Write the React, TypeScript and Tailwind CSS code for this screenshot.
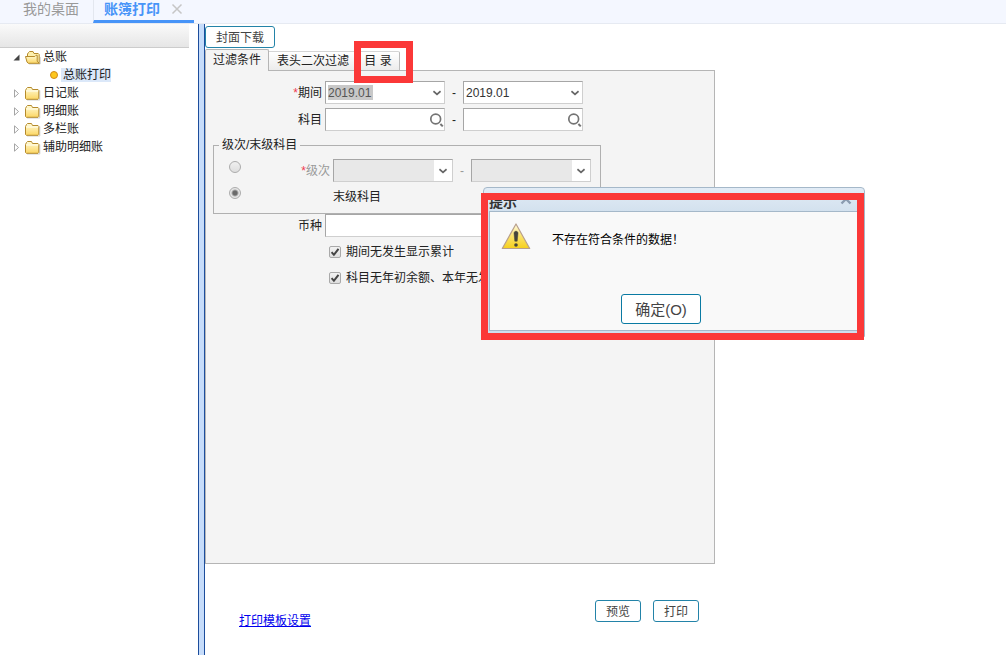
import { useState } from "react";
import type { ReactNode } from "react";

const livros = ["日记账", "明细账", "多栏账", "辅助明细账"];

const FolderClosed = () => (
  <svg className="h-4 w-4 shrink-0" viewBox="0 0 16 16">
    <defs>
      <linearGradient id="folderFill" x1="0" y1="0" x2="0" y2="1">
        <stop offset="0" stopColor="#fffbd8" />
        <stop offset="1" stopColor="#fcd663" />
      </linearGradient>
    </defs>
    <path d="M2 15h12.8V5.5" fill="none" stroke="#cfcfcf" />
    <path
      d="M.5 5.5 1.5 3.5 2.5 2.5h4l1 2h5.5l.8.8V13.5l-.8.8H1.3l-.8-.8z"
      fill="url(#folderFill)"
      stroke="#b58a2c"
    />
    <path d="M1.2 6h12" stroke="#fffef0" />
  </svg>
);

const FolderOpen = () => (
  <svg className="h-4 w-4 shrink-0" viewBox="0 0 16 16">
    <path d="M4 15h11.2V8" fill="none" stroke="#cfcfcf" />
    <path
      d="M2.5 12V5l1-1.5 1-1h3.5l1 2h4.2l1 1v8h-11z"
      fill="#fdf0ae"
      stroke="#b58a2c"
    />
    <path
      d="M.5 7.5h9.3l1.2-1.2h1.2v6l2.3 2H3.2L2 13z"
      fill="url(#folderFill)"
      stroke="#b58a2c"
    />
  </svg>
);

const Chevron = () => (
  <svg className="h-2 w-2" viewBox="0 0 8 8">
    <path d="M.4 2.2 4 5.4l3.6-3.2" fill="none" stroke="#666" strokeWidth="1.8" />
  </svg>
);

const SearchIcon = () => (
  <svg className="h-4 w-4" viewBox="0 0 16 16">
    <circle cx="6.7" cy="7" r="4.9" fill="none" stroke="#747474" strokeWidth="1.7" />
    <path d="m11.4 12 2.4 2.4" stroke="#747474" strokeWidth="2" />
  </svg>
);

const WarningIcon = () => (
  <svg className="h-8 w-8 shrink-0" viewBox="0 0 32 32">
    <defs>
      <linearGradient id="warnFill" x1="0" y1="0" x2="0" y2="1">
        <stop offset="0" stopColor="#fffbe6" />
        <stop offset="0.5" stopColor="#fbe36a" />
        <stop offset="1" stopColor="#f6cf1c" />
      </linearGradient>
    </defs>
    <path
      d="M16 4 29.7 28.5H2.3z"
      fill="url(#warnFill)"
      stroke="#b89f8c"
      strokeWidth="1.2"
      strokeLinejoin="round"
    />
    <path
      d="M14 13.2c0-2.6 4-2.6 4 0l-.8 8h-2.4z"
      fill="#45443c"
      stroke="#45443c"
      strokeWidth=".5"
    />
    <circle cx="16" cy="25" r="1.8" fill="#45443c" />
  </svg>
);

interface PeriodoProps {
  label: string;
  selected?: boolean;
}

const PeriodoSelect = ({ label, selected }: PeriodoProps) => (
  <div className="relative h-[23px] w-[120px]">
    <select
      aria-label={label}
      className={
        "h-full w-full appearance-none border border-t-[#a6a6a6] border-r-[#cfcfcf] border-b-[#cfcfcf] border-l-[#a6a6a6] bg-white pl-0.5 outline-none " +
        (selected
          ? "bg-[linear-gradient(#c8c8c8,#c8c8c8)] bg-[length:45px_15px] bg-[position:2px_center] bg-no-repeat text-[#555]"
          : "text-[#333]")
      }
    >
      <option>2019.01</option>
    </select>
    <span className="pointer-events-none absolute inset-y-0 right-1 flex items-center">
      <Chevron />
    </span>
  </div>
);

const NivelSelect = ({ label }: { label: string }) => (
  <div className="relative h-[23px] w-[120px]">
    <select
      aria-label={label}
      disabled
      className="h-full w-full appearance-none border border-t-[#a6a6a6] border-r-[#cfcfcf] border-b-[#cfcfcf] border-l-[#a6a6a6] bg-[#e8e8e8] opacity-100"
    />
    <span className="pointer-events-none absolute inset-y-px right-px flex w-[18px] items-center justify-center bg-white">
      <Chevron />
    </span>
  </div>
);

const ContaInput = ({ label }: { label: string }) => (
  <div className="relative h-[23px] w-[120px]">
    <input
      type="text"
      aria-label={label}
      className="h-full w-full border border-t-[#a6a6a6] border-r-[#cfcfcf] border-b-[#cfcfcf] border-l-[#a6a6a6] bg-white pr-5 pl-0.5 outline-none"
    />
    <button
      type="button"
      aria-label="查询"
      className="absolute inset-y-0 right-0 flex items-center"
    >
      <SearchIcon />
    </button>
  </div>
);

const Traco = () => <span className="w-[18px] text-center">-</span>;

const Opcao = ({ children }: { children: ReactNode }) => (
  <label className="flex h-[26px] items-center gap-[5px] pl-[123px] whitespace-nowrap">
    <span className="relative flex h-3 w-3 shrink-0">
      <input
        type="checkbox"
        defaultChecked
        className="peer h-3 w-3 appearance-none rounded-xs border border-[#a9a9a9] bg-linear-to-b from-[#f2f2f2] to-[#dedede]"
      />
      <svg
        className="pointer-events-none absolute inset-0 hidden h-3 w-3 peer-checked:block"
        viewBox="0 0 12 12"
      >
        <path d="m2.6 6.2 2.3 2.6 4.6-6" fill="none" stroke="#444" strokeWidth="2" />
      </svg>
    </span>
    {children}
  </label>
);

const BotaoRodape = ({ children }: { children: ReactNode }) => (
  <button
    type="button"
    className="h-[22px] w-[46px] rounded-[3px] border border-[#2383a8] bg-white pt-px text-[#444]"
  >
    {children}
  </button>
);

const App = () => {
  const [modo, setModo] = useState("final");

  const radio =
    "mt-0.5 h-3 w-3 shrink-0 appearance-none self-start rounded-full border border-[#acacac] bg-linear-to-b from-[#f0f0f0] to-[#dedede] checked:bg-[radial-gradient(circle,#6a6a6a_2px,#e6e6e6_4px)]";

  return (
    <div className="relative flex min-h-screen flex-col bg-white font-['Liberation_Sans','Noto_Sans_CJK_SC',sans-serif] text-[12px] leading-[18px] text-[#222]">
      <nav className="flex h-6 border-b border-[#e6eaf2] bg-[#f4f7ff] text-[14px]">
        <a href="#desktop" className="w-[93px] pl-[23px] text-[#999]">
          我的桌面
        </a>
        <div className="flex w-[101px] items-start border-b-3 border-l border-b-[#4794f8] border-l-[#e3e7ef] pl-2.5 font-bold text-[#4794f8]">
          <a href="#print">账簿打印</a>
          <button type="button" aria-label="关闭" className="ml-[11px] flex h-[18px] items-center">
            <svg className="h-3 w-3" viewBox="0 0 12 12">
              <path d="m1.5 1.5 9 9m0-9-9 9" stroke="#c6c6c6" strokeWidth="1.5" />
            </svg>
          </button>
        </div>
      </nav>

      <div className="flex flex-1">
        <aside className="w-[198px] shrink-0">
          <div className="mr-[9px] h-6 border-b border-[#ccc] bg-linear-to-b from-[#fafafa] to-[#e6e6e6]" />
          <ul>
            <li>
              <div className="flex h-[18px] items-center pl-[13px]">
                <svg className="mr-[5px] h-[7px] w-[7px]" viewBox="0 0 7 7">
                  <path d="M6.5.5v6h-6z" fill="#444" />
                </svg>
                <FolderOpen />
                <span className="ml-0.5">总账</span>
              </div>
              <div className="flex h-[18px] items-center pl-[50px]">
                <span className="mr-[3px] h-2 w-2 rounded-full border border-[#d08a1a] bg-[#fdc71e]" />
                <a href="#general" className="bg-[#dbe8f9] pl-0.5 leading-[14px]">
                  总账打印
                </a>
              </div>
            </li>
            {livros.map((livro) => (
              <li key={livro} className="flex h-[18px] items-center pl-[13px]">
                <svg className="mr-[5px] h-[9px] w-[7px]" viewBox="0 0 7 9">
                  <path d="M1.5.8v7.4l4-3.7z" fill="#fff" stroke="#a5a5a5" />
                </svg>
                <FolderClosed />
                <span className="ml-0.5">{livro}</span>
              </li>
            ))}
          </ul>
        </aside>

        <div className="w-[7px] shrink-0 border-x border-[#1c4d9c] bg-[#c6dcfa]" />

        <main className="flex w-[510px] flex-col">
          <button
            type="button"
            className="mt-0.5 h-[22px] w-[70px] rounded-[3px] border border-[#2383a8] bg-white pt-px text-[#444]"
          >
            封面下载
          </button>

          <div role="tablist" className="relative z-10 mt-px -mb-px flex h-[22px] items-end">
            <button
              type="button"
              role="tab"
              aria-selected="true"
              className="h-[22px] w-[64px] rounded-t-xs border border-b-0 border-[#b5b5b5] bg-[#f4f4f4] pb-0.5"
            >
              过滤条件
            </button>
            <button
              type="button"
              role="tab"
              aria-selected="false"
              className="h-5 w-[86px] border-y border-t-[#d5d5d5] border-b-[#b5b5b5] bg-linear-to-b from-white to-[#ececec] pb-px pl-0.5"
            >
              表头二次过滤
            </button>
            <button
              type="button"
              role="tab"
              aria-selected="false"
              className="h-5 w-[45px] rounded-tr-xs border border-l-0 border-t-[#d5d5d5] border-r-[#bbb] border-b-[#b5b5b5] bg-linear-to-b from-white to-[#ececec] pb-px pl-0.5"
            >
              目 录
            </button>
            <div className="pointer-events-none absolute -top-2 left-[149px] h-[42px] w-[59px] border-7 border-[#fb3838]" />
          </div>

          <form className="flex-1 border border-[#b5b5b5] bg-[#f4f4f4] pt-2.5">
            <div className="mb-1 flex items-center">
              <span className="mr-[3px] w-[116px] text-right">
                <span className="text-[#f03a50]">*</span>期间
              </span>
              <PeriodoSelect label="期间起" selected />
              <Traco />
              <PeriodoSelect label="期间止" />
            </div>
            <div className="flex items-center">
              <span className="mr-[3px] w-[116px] text-right">科目</span>
              <ContaInput label="科目起" />
              <Traco />
              <ContaInput label="科目止" />
            </div>

            <fieldset className="mt-[5px] ml-[7px] w-[388px] border border-[#b0b0b0] pb-[5px]">
              <legend className="ml-[5px] px-[3px]">级次/末级科目</legend>
              <div className="mt-[5px] mb-[3px] flex items-center pl-[15px] text-[#999]">
                <input
                  id="nivel"
                  type="radio"
                  name="modo"
                  checked={modo === "nivel"}
                  onChange={() => setModo("nivel")}
                  className={radio}
                />
                <label htmlFor="nivel" className="mr-[3px] w-[89px] text-right">
                  <span className="text-[#f03a50]">*</span>级次
                </label>
                <NivelSelect label="级次起" />
                <Traco />
                <NivelSelect label="级次止" />
              </div>
              <div className="flex h-[23px] items-center pl-[15px]">
                <input
                  id="final"
                  type="radio"
                  name="modo"
                  checked={modo === "final"}
                  onChange={() => setModo("final")}
                  className={radio}
                />
                <label htmlFor="final" className="ml-[92px]">
                  末级科目
                </label>
              </div>
            </fieldset>

            <div className="mb-0.5 flex items-center">
              <label htmlFor="moeda" className="mr-[3px] w-[116px] text-right">
                币种
              </label>
              <input
                id="moeda"
                type="text"
                className="h-[23px] w-[258px] border border-t-[#a6a6a6] border-r-[#cfcfcf] border-b-[#cfcfcf] border-l-[#a6a6a6] bg-white pl-0.5 outline-none"
              />
            </div>
            <Opcao>期间无发生显示累计</Opcao>
            <Opcao>科目无年初余额、本年无发生不显示</Opcao>
          </form>

          <footer className="flex h-[91px] items-start gap-3 pt-9 pr-4 pl-[34px]">
            <a href="#template" className="mt-3 mr-auto text-[#0000ee] underline">
              打印模板设置
            </a>
            <BotaoRodape>预览</BotaoRodape>
            <BotaoRodape>打印</BotaoRodape>
          </footer>
        </main>
      </div>

      <div
        role="dialog"
        aria-labelledby="aviso"
        className="absolute top-[187px] left-[483px] z-20 flex h-[150px] w-[382px] flex-col rounded-t-[4px] border border-[#a5b8c9] bg-linear-to-b from-[#e2ecf6] to-[#cfdeec] to-20% px-[5px] pb-[5px]"
      >
        <header className="flex h-[23px] items-center justify-between pt-1">
          <h2 id="aviso" className="text-[14px] font-bold text-[#333]">
            提示
          </h2>
          <button type="button" aria-label="关闭" className="mr-[7px] mb-1.5 h-3">
            <svg className="h-3 w-3" viewBox="0 0 12 12">
              <path d="m1.5 1.5 9 9m0-9-9 9" stroke="#8b9bb0" strokeWidth="2.4" />
            </svg>
          </button>
        </header>
        <div className="flex flex-1 flex-col items-center border border-[#a5b8c9] bg-[#f9f9f9]">
          <div className="flex w-full items-center gap-5 pt-2 pl-2.5">
            <WarningIcon />
            <p className="pt-2 text-black">不存在符合条件的数据！</p>
          </div>
          <button
            type="button"
            className="mt-auto mr-[26px] mb-1.5 h-[30px] w-20 rounded-[3px] border border-[#0a7aa3] bg-white pt-px text-[15px] text-[#444]"
          >
            确定(O)
          </button>
        </div>
        <div className="pointer-events-none absolute top-[5px] -left-[3px] h-[147px] w-[383px] border-7 border-[#fb3838]" />
      </div>
    </div>
  );
};

export default App;
